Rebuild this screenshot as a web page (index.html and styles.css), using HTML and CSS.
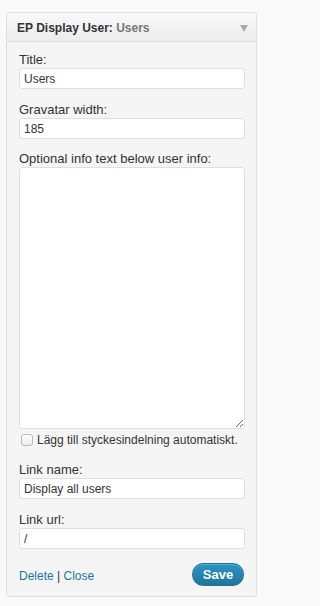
FILE: index.html
```html
<!DOCTYPE html>
<html>
<head>
<meta charset="utf-8">
<link rel="stylesheet" href="styles.css">
</head>
<body>
<div class="widget">
  <div class="widget-top">
    <div class="widget-title"><strong>EP Display User:</strong> <span class="in-title">Users</span></div>
    <span class="toggle"></span>
  </div>
  <div class="widget-inside">
    <div class="field f1">
      <label class="lbl">Title:</label>
      <input class="txt" type="text" value="Users">
    </div>
    <div class="field f2">
      <label class="lbl">Gravatar width:</label>
      <input class="txt" type="text" value="185">
    </div>
    <div class="field f3">
      <label class="lbl">Optional info text below user info:</label>
      <textarea class="area"></textarea>
    </div>
    <div class="check-row">
      <input class="cb" type="checkbox">
      <span class="cb-label">Lägg till styckesindelning automatiskt.</span>
    </div>
    <div class="field f4">
      <label class="lbl">Link name:</label>
      <input class="txt" type="text" value="Display all users">
    </div>
    <div class="field f5">
      <label class="lbl">Link url:</label>
      <input class="txt" type="text" value="/">
    </div>
    <div class="controls">
      <div class="links"><a class="lnk">Delete</a> <span class="sep">|</span> <a class="lnk">Close</a></div>
      <button class="save">Save</button>
    </div>
  </div>
</div>
</body>
</html>
```

FILE: styles.css
```css
html, body {
  margin: 0;
  padding: 0;
  background: #f9f9f9;
}
body {
  padding: 12px 0 0 6px;
  font-family: "Liberation Sans", Arial, sans-serif;
  font-size: 13px;
  color: #333;
}
.widget {
  width: 249px;
  border: 1px solid #dfdfdf;
  border-radius: 3px;
  background: #f5f5f5;
  box-sizing: content-box;
}
.widget-top {
  height: 28px;
  border-bottom: 1px solid #dfdfdf;
  background: linear-gradient(#f9f9f9, #ececec);
  display: flex;
  align-items: center;
  justify-content: space-between;
  padding: 0 8px 0 10px;
  border-radius: 3px 3px 0 0;
}
.widget-title {
  font-size: 12px;
  font-weight: bold;
  color: #333;
  padding-top: 1px;
}
.in-title {
  color: #777;
}
.toggle {
  width: 0;
  height: 0;
  border-left: 4px solid transparent;
  border-right: 4px solid transparent;
  border-top: 7px solid #a8a8a8;
  margin-top: 2px;
}
.widget-inside {
  padding: 10px 11px 10px 12px;
  display: flex;
  flex-direction: column;
}
.field {
  display: flex;
  flex-direction: column;
}
.f2, .f5 { margin-top: 13px; }
.f3 { margin-top: 12px; }
.f4 { margin-top: 13px; }
.lbl {
  line-height: 16px;
  height: 16px;
  color: #333;
}
.txt {
  box-sizing: border-box;
  width: 226px;
  height: 21px;
  margin: 0;
  border: 1px solid #dfdfdf;
  border-radius: 3px;
  background: #fff;
  padding: 0 4px;
  font-family: "Liberation Sans", Arial, sans-serif;
  font-size: 12px;
  color: #333;
  outline: none;
}
.area {
  box-sizing: border-box;
  width: 226px;
  height: 262px;
  margin: 0;
  border: 1px solid #dfdfdf;
  border-radius: 3px;
  background: #fff;
  font-family: "Liberation Sans", Arial, sans-serif;
  font-size: 12px;
  resize: vertical;
  outline: none;
}
.check-row {
  display: flex;
  align-items: center;
  height: 18px;
  margin-top: 2px;
  padding-left: 2px;
}
.cb {
  -webkit-appearance: none;
  appearance: none;
  width: 12px;
  height: 12px;
  margin: 0 4px 0 0;
  border: 1px solid #bbb;
  border-radius: 3px;
  background: linear-gradient(#fff, #ededed);
  box-sizing: border-box;
  flex: none;
}
.cb-label {
  color: #333;
  font-size: 12px;
  line-height: 16px;
  white-space: nowrap;
}
.controls {
  display: flex;
  align-items: center;
  justify-content: space-between;
  margin-top: 14px;
  padding-right: 1px;
}
.links {
  font-size: 12px;
  line-height: 16px;
  padding-top: 2px;
}
.lnk {
  color: #21759b;
  text-decoration: none;
}
.sep {
  color: #333;
}
.save {
  width: 52px;
  height: 23px;
  border: 1px solid #21759b;
  border-radius: 11px;
  background: linear-gradient(#2a95c5, #21759b);
  color: #fff;
  font-family: "Liberation Sans", Arial, sans-serif;
  font-size: 13px;
  font-weight: bold;
  padding: 0;
  box-shadow: inset 0 1px 0 rgba(120,200,230,0.5);
}
```
